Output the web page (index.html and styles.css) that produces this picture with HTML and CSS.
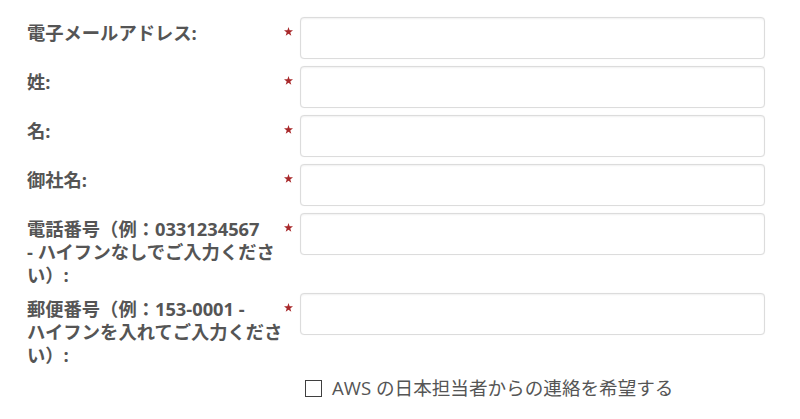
FILE: index.html
```html
<!DOCTYPE html>
<html lang="ja">
<head>
<meta charset="utf-8">
<link rel="stylesheet" href="styles.css">
</head>
<body>
<form class="form">
  <div class="row">
    <label class="label">電子メールアドレス:</label>
    <span class="req"><svg viewBox="0 0 10 10" width="9" height="9"><polygon points="5,0 6.2,3.6 10,3.7 7,6 8.1,9.6 5,7.5 1.9,9.6 3,6 0,3.7 3.8,3.6" fill="#a8282a"/></svg></span>
    <input class="field" type="text">
  </div>
  <div class="row">
    <label class="label">姓:</label>
    <span class="req"><svg viewBox="0 0 10 10" width="9" height="9"><polygon points="5,0 6.2,3.6 10,3.7 7,6 8.1,9.6 5,7.5 1.9,9.6 3,6 0,3.7 3.8,3.6" fill="#a8282a"/></svg></span>
    <input class="field" type="text">
  </div>
  <div class="row">
    <label class="label">名:</label>
    <span class="req"><svg viewBox="0 0 10 10" width="9" height="9"><polygon points="5,0 6.2,3.6 10,3.7 7,6 8.1,9.6 5,7.5 1.9,9.6 3,6 0,3.7 3.8,3.6" fill="#a8282a"/></svg></span>
    <input class="field" type="text">
  </div>
  <div class="row">
    <label class="label">御社名:</label>
    <span class="req"><svg viewBox="0 0 10 10" width="9" height="9"><polygon points="5,0 6.2,3.6 10,3.7 7,6 8.1,9.6 5,7.5 1.9,9.6 3,6 0,3.7 3.8,3.6" fill="#a8282a"/></svg></span>
    <input class="field" type="text">
  </div>
  <div class="row">
    <label class="label">電話番号（例：0331234567<br>- ハイフンなしでご入力くださ<br>い）:</label>
    <span class="req"><svg viewBox="0 0 10 10" width="9" height="9"><polygon points="5,0 6.2,3.6 10,3.7 7,6 8.1,9.6 5,7.5 1.9,9.6 3,6 0,3.7 3.8,3.6" fill="#a8282a"/></svg></span>
    <input class="field" type="text">
  </div>
  <div class="row">
    <label class="label">郵便番号（例：153-0001 -<br>ハイフンを入れてご入力くださ<br>い）:</label>
    <span class="req"><svg viewBox="0 0 10 10" width="9" height="9"><polygon points="5,0 6.2,3.6 10,3.7 7,6 8.1,9.6 5,7.5 1.9,9.6 3,6 0,3.7 3.8,3.6" fill="#a8282a"/></svg></span>
    <input class="field" type="text">
  </div>
  <div class="check-row">
    <span class="box"></span>
    <span class="check-text">AWS の日本担当者からの連絡を希望する</span>
  </div>
</form>
</body>
</html>
```

FILE: styles.css
```css
html, body {
  margin: 0;
  padding: 0;
  background: #ffffff;
}

body {
  font-family: "Open Sans", "Noto Sans CJK JP", sans-serif;
  color: #555555;
}

.form {
  padding: 17px 0 0 27px;
  display: flex;
  flex-direction: column;
  gap: 7px;
}

.row {
  display: flex;
  align-items: flex-start;
}

.label {
  width: 258px;
  padding-top: 4px;
  font-size: 18.3px;
  line-height: 23px;
  font-weight: 700;
  color: #555555;
  white-space: nowrap;
}

.req {
  width: 15px;
  display: flex;
  padding-top: 10px;
  margin-left: -1px;
}

.req svg {
  display: block;
}

.field {
  box-sizing: border-box;
  width: 465px;
  height: 42px;
  margin: 0 0 0 1px;
  border: 1px solid #dcdcdc;
  border-radius: 4px;
  background: #ffffff;
  box-shadow: inset 0 1px 2px rgba(0, 0, 0, 0.06), 0 0 1px rgba(0, 0, 0, 0.08);
}

.check-row {
  display: flex;
  align-items: center;
  margin-top: 3px;
  padding-left: 278px;
  gap: 10px;
}

.box {
  box-sizing: border-box;
  width: 17px;
  height: 17px;
  border: 1.5px solid #3f3f3f;
  background: #ffffff;
}

.check-text {
  font-size: 18.6px;
  line-height: 24px;
  color: #555555;
}
```
